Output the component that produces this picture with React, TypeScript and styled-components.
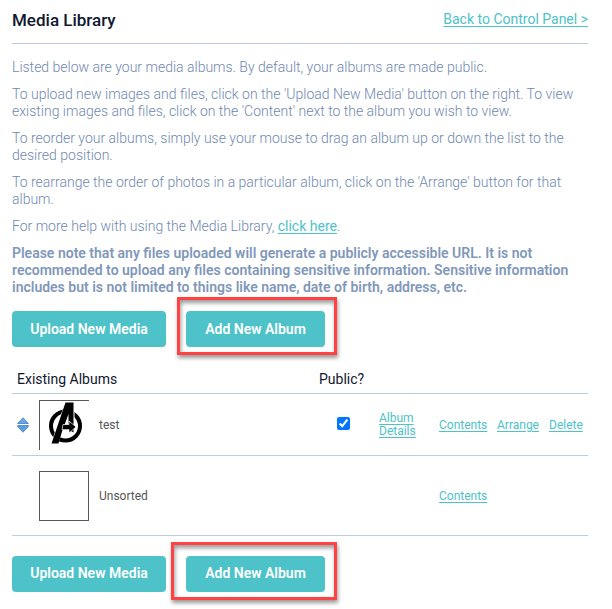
import React from "react";
import styled, { createGlobalStyle } from "styled-components";

const GlobalStyle = createGlobalStyle`
  * { box-sizing: border-box; }
  body {
    margin: 0;
    background: #fff;
    color: #6f88b2;
    font: 400 14px/17px Roboto, sans-serif;
  }
`;

const Page = styled.main`
  padding: 0 24px 16px 12px;
`;

const Header = styled.header`
  display: flex;
  justify-content: space-between;
  align-items: center;
  height: 44px;
  padding-bottom: 4px;
  border-bottom: 1px solid #bccbdc;
`;

const Title = styled.h1`
  margin: 0;
  color: #101830;
  font-size: 17px;
  line-height: 20px;
  font-weight: 500;
`;

const Link = styled.a`
  color: #4dc2c9;
  font-weight: 400;
  text-decoration: underline;
  text-underline-offset: 2px;
`;

const Intro = styled.section`
  display: flex;
  flex-direction: column;
  gap: 10px;
  padding: 15px 0;
`;

const Paragraph = styled.p<{ $strong?: boolean }>`
  margin: 0;
  color: ${(p) => (p.$strong ? "#7f98ba" : "inherit")};
  font-weight: ${(p) => (p.$strong ? 600 : 300)};
`;

const Actions = styled.div`
  display: flex;
  gap: 20px;
`;

const Button = styled.button<{ $wide?: boolean }>`
  width: ${(p) => (p.$wide ? 154 : 139)}px;
  height: 36px;
  padding: 0;
  border: 0;
  border-radius: 4px;
  background: #4dc2c9;
  color: #fff;
  font: 600 14px/17px Roboto, sans-serif;
  white-space: nowrap;
`;

const Marked = styled.div`
  position: relative;
`;

const Highlight = styled.span<{ $reach: number }>`
  position: absolute;
  top: -14px;
  bottom: -8px;
  left: -${(p) => p.$reach}px;
  right: -12px;
  border: 3px solid #ff4343;
  box-shadow: 1px 3px 4px rgba(0, 0, 0, 0.4), inset 1px 3px 4px rgba(0, 0, 0, 0.4);
  pointer-events: none;
`;

const Table = styled.table`
  width: 100%;
  margin: 18px 0 20px;
  border-collapse: collapse;
  table-layout: fixed;
  font-size: 12px;
  line-height: 13px;
  color: #555;
`;

const Col = styled.col<{ $width?: number }>`
  width: ${(p) => (p.$width ? `${p.$width}px` : "auto")};
`;

const HeadCell = styled.th`
  height: 28px;
  padding: 2px 5px 0;
  border-bottom: 1px solid #bccde0;
  color: #101830;
  font-size: 14px;
  line-height: 17px;
  font-weight: 400;
  text-align: left;
`;

const Row = styled.tr<{ $height: number }>`
  height: ${(p) => p.$height}px;
  border-bottom: 1px solid #bccde0;
`;

const Cell = styled.td<{ $center?: boolean }>`
  padding: ${(p) => (p.$center ? "0 5px 1px 4px" : "2px 5px 0")};
  text-align: ${(p) => (p.$center ? "center" : "left")};
`;

const Thumb = styled.div<{ $open?: boolean }>`
  width: 50px;
  height: 50px;
  border: 1px solid #58585c;
  ${(p) => p.$open && "border-right: 0; border-bottom: 0;"}
`;

const Check = styled.input`
  display: block;
  width: 13px;
  height: 13px;
  margin: 0 auto;
  accent-color: #0075ff;
`;

const Svg = styled.svg`
  display: block;
`;

function SortIcon() {
  return (
    <Svg width="12" height="16" viewBox="0 0 12 16" aria-hidden="true">
      <path d="M6 .8 11.4 6.5H.6Z" fill="#6ba5e2" stroke="#5590d0" strokeLinejoin="round" />
      <path d="M.6 8.5h10.8v1L6 15.200.6 9.5Z" fill="#5f9cdc" stroke="#5590d0" strokeLinejoin="round" />
    </Svg>
  );
}

function AlbumLogo() {
  return (
    <Svg width="48" height="48" viewBox="0 0 48 48" aria-hidden="true">
      <circle cx="25.5" cy="25" r="14.5" fill="none" stroke="#000" strokeWidth="4" />
      <path d="M20.5 14 26 1.5h8.5V32h-5.5v-3H23L18 43H11Z" fill="#fff" />
      <path
        d="M25.5 1.5H33.5V31.5L29 29H22.5L18.5 42.5H11.5ZM28.500 13 24.500 24h4Z"
        fill="#000"
        fillRule="evenodd"
      />
      <path d="M23 23.500h6V20l7 6-7 6V28.500H22Z" fill="#000" stroke="#fff" strokeWidth=".7" />
    </Svg>
  );
}

function ActionBar({ reach }: { reach: number }) {
  return (
    <Actions>
      <Button type="button" $wide>Upload New Media</Button>
      <Marked>
        <Button type="button">Add New Album</Button>
        <Highlight $reach={reach} />
      </Marked>
    </Actions>
  );
}

export default function App() {
  return (
    <Page>
      <GlobalStyle />
      <Header>
        <Title>Media Library</Title>
        <Link href="#panel">Back to Control Panel &gt;</Link>
      </Header>
      <Intro>
        <Paragraph>Listed below are your media albums. By default, your albums are made public.</Paragraph>
        <Paragraph>
          To upload new images and files, click on the 'Upload New Media' button on the right. To view
          existing images and files, click on the 'Content' next to the album you wish to view.
        </Paragraph>
        <Paragraph>
          To reorder your albums, simply use your mouse to drag an album up or down the list to the
          desired position.
        </Paragraph>
        <Paragraph>
          To rearrange the order of photos in a particular album, click on the 'Arrange' button for that
          album.
        </Paragraph>
        <Paragraph>
          For more help with using the Media Library, <Link href="#help">click here</Link>.
        </Paragraph>
        <Paragraph $strong>
          Please note that any files uploaded will generate a publicly accessible URL. It is not
          recommended to upload any files containing sensitive information. Sensitive information
          includes but is not limited to things like name, date of birth, address, etc.
        </Paragraph>
      </Intro>
      <ActionBar reach={9} />
      <Table>
        <colgroup>
          <Col $width={22} />
          <Col $width={60} />
          <Col />
          <Col $width={60} />
          <Col $width={60} />
          <Col $width={58} />
          <Col $width={52} />
          <Col $width={44} />
        </colgroup>
        <thead>
          <tr>
            <HeadCell colSpan={3}>Existing Albums</HeadCell>
            <HeadCell>Public?</HeadCell>
            <HeadCell colSpan={4} />
          </tr>
        </thead>
        <tbody>
          <Row $height={62}>
            <Cell><SortIcon /></Cell>
            <Cell><Thumb $open><AlbumLogo /></Thumb></Cell>
            <Cell>test</Cell>
            <Cell $center><Check type="checkbox" defaultChecked aria-label="Public: test" /></Cell>
            <Cell><Link href="#details">Album Details</Link></Cell>
            <Cell><Link href="#contents">Contents</Link></Cell>
            <Cell><Link href="#arrange">Arrange</Link></Cell>
            <Cell><Link href="#delete">Delete</Link></Cell>
          </Row>
          <Row $height={80}>
            <Cell />
            <Cell><Thumb /></Cell>
            <Cell>Unsorted</Cell>
            <Cell />
            <Cell />
            <Cell><Link href="#unsorted">Contents</Link></Cell>
            <Cell />
            <Cell />
          </Row>
        </tbody>
      </Table>
      <ActionBar reach={15} />
    </Page>
  );
}
